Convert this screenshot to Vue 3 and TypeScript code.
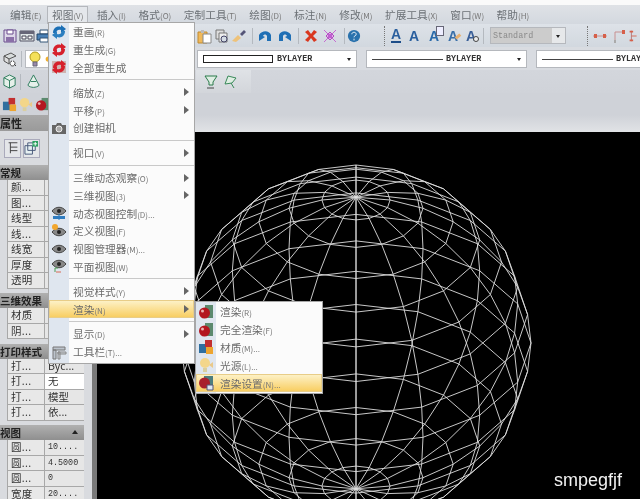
<script setup lang="ts">
type Part = [string, string, string?];
const regenTop = "M2 9C2 4 6 1.500 10 3V1l5 4-5 4V6C7.500 5 5 6.500 5 9z";
const regenBot = "M14 7C14 12 10 14.500 6 13v2l-5-4 5-4v3c2.500 1 4.500-.5 5-3z";
const icons: Record<string, Part[]> = {
  save: [["M2 2h12v12H2z", "#ddd8e8", "#6a4d8e"], ["M5 2h6v4H5z", "#fff", "#6a4d8e"], ["M4 9h8v5H4z", "#8a70a8"]],
  grid: [["M1 3h14v10H1z", "#dfe6e6", "#556"], ["M1 3h14v3H1z", "#667"], ["M3 8h4v3H3zM9 8h4v3H9z", "#fff", "#445"]],
  printer: [["M4 2h8v4H4z", "#fff", "#357"], ["M1 6h14v6H1z", "#4a80b5", "#246"], ["M4 10h8v4H4z", "#fff", "#357"]],
  blueS: [[regenTop, "#1b6fb5"], [regenBot, "#2c7fc0"]],
  redS: [[regenTop, "#d6202c"], [regenBot, "#d6202c"]],
  redS2: [["M1 2h14v12H1z", "#cdb4b1"], [regenTop, "#d6202c"], [regenBot, "#d6202c"]],
  camera: [["M1 5h4l1-2h4l1 2h4v9H1z", "#666"], ["M5 9a3 3 0 1 0 6 0a3 3 0 1 0-6 0", "#aaa", "#eee"]],
  eyeBlue: [["M1 6c4-5 10-5 14 0c-4 5-10 5-14 0z", "#888", "#444"], ["M6 6a2 2 0 1 0 4 0a2 2 0 1 0-4 0", "#222"], ["M2 11h12v3H2z", "#2f7cc0"], ["M8 9v6", "#c7d7e8", "#2f7cc0"]],
  eyeSun: [["M1 9c4-5 10-5 14 0c-4 5-10 5-14 0z", "#888", "#444"], ["M6 9a2 2 0 1 0 4 0a2 2 0 1 0-4 0", "#222"], ["M1 4a3 3 0 1 0 6 0a3 3 0 1 0-6 0", "#f2a72e"]],
  eye: [["M1 8c4-5 10-5 14 0c-4 5-10 5-14 0z", "#888", "#444"], ["M6 8a2 2 0 1 0 4 0a2 2 0 1 0-4 0", "#222"]],
  eyePlan: [["M1 6c4-5 10-5 14 0c-4 5-10 5-14 0z", "#888", "#444"], ["M6 6a2 2 0 1 0 4 0a2 2 0 1 0-4 0", "#222"], ["M4 14v-4h3", "none", "#4a9a55"], ["M5 14h5", "none", "#d86a55"]],
  toolbar: [["M2 3h12v3H2zM2 6h3v9H2z", "#bcc3cc", "#777"], ["M7 8h8v2H7zM7 8h2v7H7z", "#ccd2d8", "#888"]],
  paste: [["M1 4h9v11H1z", "#f0b95a", "#c08a30"], ["M6 6h8v9H6z", "#fff", "#888"], ["M4 2h3v3H4z", "#bbb"]],
  copy: [["M2 2h8v9H2z", "#ddd", "#777"], ["M5 5h8v9H5z", "#eee", "#777"], ["M7 11a3 3 0 1 0 6 0a3 3 0 1 0-6 0", "#d5dce4", "#446"]],
  brush: [["M1 13l6-6l3 3l-5 4z", "#eec27a"], ["M9 6l4-4l2 2l-4 4z", "#557"]],
  undo: [["M1 13V7c3-5 10-5 12 0v6h-4V8c-1-2-3-2-4 0l2 1l-6 4z", "#1f6fb5"]],
  redo: [["M15 13V7c-3-5-10-5-12 0v6h4V8c1-2 3-2 4 0l-2 1l6 4z", "#1f6fb5"]],
  cross: [["M2 4l3-2l3 4l3-4l3 2l-4 4l4 4l-3 2l-3-4l-3 4l-3-2l4-4z", "#d9371f"]],
  purple: [["M2 2l12 12M14 2L2 14", "none", "#c66ad0"], ["M4 8l4-4l4 4l-4 4z", "#e4b0ea", "#b04ec0"], ["M6 6h4v4H6z", "#c060d0"]],
  help: [["M1 8a7 7 0 1 0 14 0a7 7 0 1 0-14 0", "#2a72ad"], ["M5.500 6c0-3 5-3 5 0c0 2-2.500 1.500-2.500 3.500M8 11v2", "none", "#fff"]],
  dim1: [["M1 8h14", "none", "#c89090"], ["M2 6h3v4H2zM11 6h3v4h-3z", "#d6604a"]],
  dim2: [["M4 14V4h9", "none", "#c89090"], ["M11 2h3v4h-3z", "#d6604a"], ["M3 12h2v3H3z", "#aaa"]],
  dim3: [["M5 2v12", "none", "#b07070"], ["M3 2h4v2H3zM3 12h4v2H3z", "#d6604a"], ["M5 8h6", "none", "#d6604a"]],
  filter: [["M2 5l7-3l5 3l-7 3z", "#d8dcdc", "#555"], ["M2 5v5l5 3v-5z", "#ddd", "#555"], ["M10 10a2.500 2.500 0 1 0 1 0M12 13l2 2", "#fff", "#444"]],
  cube: [["M8 1l6 3v8l-6 3l-6-3V4z", "#e6f0ea", "#2a7a5a"], ["M2 4l6 3l6-3M8 7v8", "none", "#2a7a5a"]],
  cone: [["M8 1l6 11c-3 3-9 3-12 0z", "#e6f0ea", "#2a7a5a"], ["M5 8h6", "none", "#2a7a5a"]],
  material: [["M1 5h8v9H1z", "#2f6f9f"], ["M7 1h7v7H7z", "#c22f2f"], ["M8 8h7v7H8z", "#eda530"]],
  light: [["M2 6a5 5 0 1 0 10 0a5 5 0 1 0-10 0", "#f3d68a"], ["M5 11h4v4H5z", "#d9cfa0"], ["M11 8l4-3v6z", "#e9c98a"]],
  ball: [["M7 1h8v13H7z", "#5c8a6e"], ["M1 9a5.500 5.500 0 1 0 11 0a5.500 5.500 0 1 0-11 0", "#b3161f"], ["M3 7a1.500 1.500 0 1 0 3 0a1.500 1.500 0 1 0-3 0", "#e8b0b0"]],
  ballSet: [["M6 1h9v10H6z", "#4d7d7e"], ["M1 8a5.500 5.500 0 1 0 11 0a5.500 5.500 0 1 0-11 0", "#a8202c"], ["M9 10h6v5H9z", "#dfe9f2", "#557"]],
  wedge1: [["M2 2h12l-4 6v3l-4 0V8z", "#dfeee3", "#2a7a4a"], ["M4 14h7", "none", "#444"]],
  wedge2: [["M6 2l8 2l-4 5l-7 1z", "#dfeee3", "#3a8a5a"], ["M9 9l3 5", "none", "#3a8a5a"]],
  treeTool: [["M3 2h10M5 2v12M5 7h8M5 11h8", "none", "#333"]],
  addTool: [["M1 5h8v9H1zM4 2h8v8H4z", "#e6f0f2", "#457"], ["M9 0h6v6H9z", "#2aa060"], ["M12 1v4M10 3h4", "none", "#fff"]],
  bulb: [["M3 6a5 5 0 1 0 10 0a5 5 0 1 0-10 0", "#f4e05a", "#b09a20"], ["M6 11h4v4H6z", "#98a", "#667"]],
  sun: [["M3 8a3 3 0 1 0 6 0a3 3 0 1 0-6 0", "#f0b030"], ["M11 8h4", "none", "#e0a030"]],
};

interface Item { n?: string; w: number; a?: string; }
const row1: Item[] = [
  { w: 1 }, { n: "save", w: 17 }, { n: "grid", w: 17 }, { n: "printer", w: 17 }, { w: 144 },
  { n: "paste", w: 17 }, { n: "copy", w: 17 }, { n: "brush", w: 17 }, { n: "sep", w: 10 },
  { n: "undo", w: 17 }, { n: "redo", w: 20 }, { n: "sep", w: 8 }, { n: "cross", w: 17 },
  { n: "purple", w: 22 }, { n: "sep", w: 6 }, { n: "help", w: 14 }, { w: 20 }, { n: "dots", w: 6 },
  { a: "under", w: 18 }, { a: "plain", w: 18 }, { a: "doc", w: 22 }, { a: "pen", w: 16 }, { a: "zoom", w: 20 },
  { n: "sep", w: 5 }, { w: 4 },
];
const row1b: Item[] = [{ w: 18 }, { n: "dots", w: 6 }, { n: "dim1", w: 20 }, { n: "dim2", w: 17 }, { n: "dim3", w: 14 }];
const row3: Item[] = [{ w: 1 }, { n: "cube", w: 16 }, { n: "sep", w: 7 }, { n: "cone", w: 18 }];
const row3b: Item[] = [{ w: 5 }, { n: "wedge1", w: 20 }, { n: "wedge2", w: 18 }];
const row4: Item[] = [{ w: 1 }, { n: "material", w: 16 }, { n: "light", w: 17 }, { n: "ball", w: 17 }];

const menus = [
  ["编辑", "(E)"], ["视图", "(V)"], ["插入", "(I)"], ["格式", "(O)"],
  ["定制工具", "(T)"], ["绘图", "(D)"], ["标注", "(N)"], ["修改", "(M)"],
  ["扩展工具", "(X)"], ["窗口", "(W)"], ["帮助", "(H)"],
];

interface MenuRow { t?: string; k?: string; i?: string; arrow?: boolean; on?: boolean; sep?: boolean; }
const viewMenu: MenuRow[] = [
  { t: "重画", k: "(R)", i: "blueS" }, { t: "重生成", k: "(G)", i: "redS" }, { t: "全部重生成", i: "redS2" },
  { sep: true },
  { t: "缩放", k: "(Z)", arrow: true }, { t: "平移", k: "(P)", arrow: true }, { t: "创建相机", i: "camera" },
  { sep: true },
  { t: "视口", k: "(V)", arrow: true },
  { sep: true },
  { t: "三维动态观察", k: "(O)", arrow: true }, { t: "三维视图", k: "(3)", arrow: true },
  { t: "动态视图控制", k: "(D)...", i: "eyeBlue" }, { t: "定义视图", k: "(F)", i: "eyeSun" },
  { t: "视图管理器", k: "(M)...", i: "eye" }, { t: "平面视图", k: "(W)", i: "eyePlan" },
  { sep: true },
  { t: "视觉样式", k: "(Y)", arrow: true }, { t: "渲染", k: "(N)", arrow: true, on: true },
  { sep: true },
  { t: "显示", k: "(D)", arrow: true }, { t: "工具栏", k: "(T)...", i: "toolbar" },
];
const renderMenu: MenuRow[] = [
  { t: "渲染", k: "(R)", i: "ball" }, { t: "完全渲染", k: "(F)", i: "ball" },
  { t: "材质", k: "(M)...", i: "material" }, { t: "光源", k: "(L)...", i: "light" },
  { t: "渲染设置", k: "(N)...", i: "ballSet", on: true },
];

const groups: { h: string; rows: [string, string, boolean?][]; caret?: boolean }[] = [
  { h: "常规", rows: [["颜...", ""], ["图...", ""], ["线型", ""], ["线...", ""], ["线宽", ""], ["厚度", ""], ["透明", ""]] },
  { h: "三维效果", rows: [["材质", ""], ["阴...", ""]] },
  { h: "打印样式", rows: [["打...", "Byc..."], ["打...", "无", true], ["打...", "模型"], ["打...", "依..."]] },
  { h: "视图", caret: true, rows: [["圆...", "10...."], ["圆...", "4.5000"], ["圆...", "0"], ["宽度", "20...."]] },
];
const isNum = (s: string) => /^[0-9]/.test(s);

// Wireframe sphere: orthographic projection, north pole tipped 35 degrees toward the viewer.
const Ry = 178, Rx = 175, cx = 259, cy = 211;
const rad = Math.PI / 180;
const sinT = Math.sin(35 * rad), cosT = Math.cos(35 * rad);
const latList = Array.from({ length: 17 }, (_, i) => 90 - i * 11.25);
function project(lat: number, lon: number): string {
  const x = Math.cos(lat * rad) * Math.sin(lon * rad);
  const z = Math.cos(lat * rad) * Math.cos(lon * rad);
  const y = Math.sin(lat * rad);
  return `${(cx + Rx * x).toFixed(1)},${(cy - Ry * (y * cosT - z * sinT)).toFixed(1)}`;
}
const lons = Array.from({ length: 16 }, (_, i) => i * 22.5);
const wire: string[] = [];
for (const lat of latList.slice(1, -1)) {
  wire.push([...lons, 360].map((l) => project(lat, l)).join(" "));
}
for (const lon of lons) {
  wire.push(latList.map((l) => project(l, lon)).join(" "));
}
</script>

<template>
  <div class="app">
    <div class="titlestrip"></div>
    <div class="menubar">
      <span v-for="m in menus" :key="m[0]" class="mb" :class="{ active: m[0] === '视图' }">{{ m[0] }}<small>{{ m[1] }}</small></span>
    </div>

    <div class="tb r1">
      <template v-for="(it, i) in row1" :key="i">
        <div class="cell" :style="{ width: it.w + 'px' }">
          <i v-if="it.n === 'sep'" class="sep"></i>
          <i v-else-if="it.n === 'dots'" class="dots"></i>
          <svg v-else-if="it.n" width="16" height="16" viewBox="0 0 16 16"><path v-for="(p, j) in icons[it.n]" :key="j" :d="p[0]" :fill="p[1]" :stroke="p[2] || 'none'" /></svg>
          <span v-else-if="it.a" class="aa" :class="it.a">A</span>
        </div>
      </template>
      <div class="combo std"><span>Standard</span><b class="drop"></b></div>
      <template v-for="(it, i) in row1b" :key="'b' + i">
        <div class="cell" :style="{ width: it.w + 'px' }">
          <i v-if="it.n === 'dots'" class="dots"></i>
          <svg v-else-if="it.n" width="16" height="16" viewBox="0 0 16 16"><path v-for="(p, j) in icons[it.n]" :key="j" :d="p[0]" :fill="p[1]" :stroke="p[2] || 'none'" /></svg>
        </div>
      </template>
    </div>

    <div class="tb r2">
      <div class="cell first"><svg width="16" height="16" viewBox="0 0 16 16"><path v-for="(p, j) in icons.filter" :key="j" :d="p[0]" :fill="p[1]" :stroke="p[2] || 'none'" /></svg></div>
      <div class="cell gapcell"><i class="sep"></i></div>
      <div class="layerbox">
        <svg width="16" height="16" viewBox="0 0 16 16"><path v-for="(p, j) in icons.bulb" :key="j" :d="p[0]" :fill="p[1]" :stroke="p[2] || 'none'" /></svg>
        <svg width="14" height="16" viewBox="0 0 16 16"><path v-for="(p, j) in icons.sun" :key="j" :d="p[0]" :fill="p[1]" :stroke="p[2] || 'none'" /></svg>
      </div>
      <div class="combo wide color"><i class="swatch"></i><span>BYLAYER</span><b class="drop"></b></div>
      <div class="combo wide line"><i class="ln"></i><span>BYLAYER</span><b class="drop"></b></div>
      <div class="combo wide line last"><i class="ln"></i><span>BYLAYER</span></div>
    </div>

    <div class="tb r3">
      <div class="cell" v-for="(it, i) in row3" :key="i" :style="{ width: it.w + 'px' }">
        <i v-if="it.n === 'sep'" class="sep"></i>
        <svg v-else-if="it.n" width="15" height="15" viewBox="0 0 16 16"><path v-for="(p, j) in icons[it.n]" :key="j" :d="p[0]" :fill="p[1]" :stroke="p[2] || 'none'" /></svg>
      </div>
      <div class="band">
        <div class="cell" v-for="(it, i) in row3b" :key="i" :style="{ width: it.w + 'px' }">
          <svg v-if="it.n" width="16" height="16" viewBox="0 0 16 16"><path v-for="(p, j) in icons[it.n]" :key="j" :d="p[0]" :fill="p[1]" :stroke="p[2] || 'none'" /></svg>
        </div>
      </div>
    </div>

    <div class="tb r4">
      <div class="cell" v-for="(it, i) in row4" :key="i" :style="{ width: it.w + 'px' }">
        <svg v-if="it.n" width="15" height="15" viewBox="0 0 16 16"><path v-for="(p, j) in icons[it.n]" :key="j" :d="p[0]" :fill="p[1]" :stroke="p[2] || 'none'" /></svg>
      </div>
    </div>

    <div class="main">
      <aside class="panel">
        <div class="paneltitle">属性</div>
        <div class="paneltools">
          <span class="ptool"><svg width="14" height="14" viewBox="0 0 16 16"><path v-for="(p, j) in icons.treeTool" :key="j" :d="p[0]" :fill="p[1]" :stroke="p[2] || 'none'" /></svg></span>
          <span class="ptool"><svg width="15" height="15" viewBox="0 0 16 16"><path v-for="(p, j) in icons.addTool" :key="j" :d="p[0]" :fill="p[1]" :stroke="p[2] || 'none'" /></svg></span>
        </div>
        <div class="props">
          <section v-for="g in groups" :key="g.h" class="grp">
            <div class="ghead"><span>{{ g.h }}</span><b v-if="g.caret" class="caret"></b></div>
            <div v-for="(r, i) in g.rows" :key="i" class="prow">
              <span class="lab">{{ r[0] }}</span>
              <span class="val" :class="{ white: r[2], num: isNum(r[1]) }">{{ r[1] }}</span>
            </div>
          </section>
        </div>
      </aside>
      <div class="splitter"></div>
      <div class="work">
        <div class="workstrip"></div>
        <div class="canvas">
          <svg class="sphere" width="543" height="367" viewBox="0 0 543 367">
            <polyline v-for="(p, i) in wire" :key="i" :points="p" fill="none" stroke="#dedede" stroke-width="0.9" />
          </svg>
          <span class="mark">smpegfjf</span>
        </div>
      </div>
    </div>

    <div class="menu view">
      <template v-for="(r, i) in viewMenu" :key="i">
        <div v-if="r.sep" class="msep"></div>
        <div v-else class="mrow" :class="{ on: r.on }">
          <span class="mic"><svg v-if="r.i" width="16" height="16" viewBox="0 0 16 16"><path v-for="(p, j) in icons[r.i]" :key="j" :d="p[0]" :fill="p[1]" :stroke="p[2] || 'none'" /></svg></span>
          <span class="mtxt">{{ r.t }}<small>{{ r.k }}</small></span>
          <b v-if="r.arrow" class="arrow"></b>
        </div>
      </template>
    </div>

    <div class="menu render">
      <div v-for="(r, i) in renderMenu" :key="i" class="mrow" :class="{ on: r.on }">
        <span class="mic"><svg v-if="r.i" width="16" height="16" viewBox="0 0 16 16"><path v-for="(p, j) in icons[r.i]" :key="j" :d="p[0]" :fill="p[1]" :stroke="p[2] || 'none'" /></svg></span>
        <span class="mtxt">{{ r.t }}<small>{{ r.k }}</small></span>
      </div>
    </div>
  </div>
</template>

<style scoped>
.app {
  position: relative;
  width: 640px;
  height: 499px;
  overflow: hidden;
  display: flex;
  flex-direction: column;
  background: #d5d8dd;
  font-family: "Noto Sans CJK SC", "Liberation Sans", sans-serif;
  font-size: 10.7px;
  color: #666;
  filter: blur(0.35px);
}
small { font-size: 8px; color: #777; }
.titlestrip { height: 5px; background: #fafafa; flex: none; }
.menubar {
  height: 19px;
  flex: none;
  display: flex;
  align-items: center;
  padding-left: 10px;
  gap: 12.5px;
  background: linear-gradient(#dfe2e6, #d3d8df);
  color: #6b7075;
  white-space: nowrap;
}
.mb { line-height: 17px; }
.mb.active {
  margin: 0 -4px 0 -7px;
  padding: 0 5px;
  background: #e4e7eb;
  box-shadow: inset 0 0 0 1px #b4b7bc;
}
.tb { display: flex; align-items: center; flex: none; }
.r1 { height: 23px; background: linear-gradient(#dde2e8, #d2d8df); }
.r2 { height: 23px; background: #d9dce1; padding-top: 1px; box-sizing: border-box; }
.r3 { height: 23px; background: linear-gradient(#d3d6dc, #d0d3d9); }
.r4 { height: 22px; background: #cfd2d8; }
.cell { flex: none; display: flex; align-items: center; justify-content: center; height: 100%; }
.cell svg { display: block; }
.sep { width: 1px; height: 16px; background: #b4b9bf; display: block; }
.dots { width: 0; height: 20px; border-left: 1px dotted #777; display: block; }
.aa { font: bold 14px "Liberation Sans", sans-serif; color: #2a5f9e; position: relative; line-height: 16px; }
.aa.under { border-bottom: 2px solid #1d4d88; line-height: 13px; }
.aa.doc { color: #2a6aaa; }
.aa.doc::after { content: ""; position: absolute; left: 7px; top: -2px; width: 6px; height: 8px; background: #eef; border: 1px solid #667; }
.aa.pen { color: #3a6fa8; }
.aa.pen::after { content: ""; position: absolute; left: 7px; top: 7px; width: 6px; height: 3px; background: #e8b070; transform: rotate(-40deg); }
.aa.zoom { color: #3a5f98; }
.aa.zoom::after { content: ""; position: absolute; left: 7px; top: 8px; width: 4px; height: 4px; border: 1px solid #444; border-radius: 50%; background: #eee; }
.combo {
  flex: none;
  display: flex;
  align-items: center;
  box-sizing: border-box;
  background: #fff;
  border: 1px solid #b5b8bd;
  font: 8.4px "Liberation Mono", monospace;
  font-weight: 700;
  color: #333;
  position: relative;
}
.std { width: 76px; height: 17px; padding-left: 2px; background: linear-gradient(90deg, #ccc 0 83%, #e6e8ea 83%); color: #8a8a8a; font-weight: 400; }
.drop { position: absolute; right: 5px; top: 50%; margin-top: -1px; width: 0; height: 0; border: 2.5px solid transparent; border-top: 3px solid #222; border-bottom: 0; }
.first { width: 19px; }
.gapcell { width: 4px; }
.layerbox { flex: none; width: 170px; height: 18px; margin-left: 2px; background: #fff; border: 1px solid #b8bbc0; box-sizing: border-box; display: flex; align-items: center; padding-left: 1px; }
.wide { height: 18px; }
.color { width: 160px; padding-left: 5px; margin-left: 2px; }
.swatch { width: 70px; height: 8px; box-sizing: border-box; border: 1px solid #222; background: #fff; margin-right: 4px; flex: none; }
.line { width: 161px; margin-left: 9px; padding-left: 5px; }
.last { width: 110px; }
.ln { width: 71px; height: 1px; background: #444; margin-right: 3px; flex: none; }
.band { margin-left: 154px; height: 100%; width: 55px; display: flex; background: linear-gradient(#dfe2e6, #d3d6db); }

.main { flex: 1; display: flex; min-height: 0; }
.panel { width: 92px; flex: none; background: #d9dbdf; display: flex; flex-direction: column; }
.splitter { width: 5px; flex: none; background: #7a7a7a; }
.paneltitle { height: 16px; flex: none; background: linear-gradient(#a9a9a9, #9a9a9a); font-weight: 700; color: #222; font-size: 11px; line-height: 16px; }
.paneltools { height: 34px; flex: none; display: flex; align-items: center; gap: 2px; padding-left: 4px; box-sizing: border-box; }
.ptool { width: 17px; height: 19px; display: flex; align-items: center; justify-content: center; border: 1px solid #aab; box-sizing: border-box; background: #e4e6e9; }
.props { display: flex; flex-direction: column; gap: 4.5px; width: 84px; }
.ghead { height: 15px; background: linear-gradient(#b0b0b0, #8f8f8f); font-weight: 700; color: #222; line-height: 15px; font-size: 10.5px; display: flex; justify-content: space-between; padding-right: 6px; }
.caret { width: 0; height: 0; margin-top: 5px; border: 3px solid transparent; border-bottom: 4px solid #222; border-top: 0; }
.prow { height: 15.5px; display: flex; margin-left: 7px; box-sizing: border-box; border-bottom: 1px solid #a8a8a8; line-height: 14px; color: #333; font-size: 10.5px; }
.lab { width: 38px; flex: none; background: #e8e8e8; border-left: 1px solid #a8a8a8; border-right: 1px solid #a8a8a8; box-sizing: border-box; padding-left: 3px; letter-spacing: 0.3px; }
.val { flex: 1; background: #e6e6e6; padding-left: 3px; white-space: nowrap; overflow: hidden; }
.val.white { background: #fff; }
.val.num { font: 8.4px/14px "Liberation Mono", monospace; }

.work { flex: 1; display: flex; flex-direction: column; min-width: 0; }
.workstrip { height: 17px; flex: none; background: linear-gradient(#cfd2d8, #e1e3e6); }
.canvas { flex: 1; background: #000; position: relative; overflow: hidden; }
.sphere { display: block; }
.mark { position: absolute; left: 457px; top: 338px; color: #f2f2f2; font: 18px "Liberation Sans", sans-serif; }

.menu {
  position: absolute;
  box-sizing: border-box;
  background: linear-gradient(90deg, #dfe6ef 0 20px, #fbfbfb 20px);
  border: 1px solid #a7a7a7;
  color: #6b6b6b;
  white-space: nowrap;
}
.view { left: 48px; top: 22px; width: 147px; height: 342px; }
.render { left: 195px; top: 301px; width: 128px; height: 93px; padding-top: 1px; }
.mrow { height: 17.8px; display: flex; align-items: center; position: relative; box-sizing: border-box; }
.mrow.on { background: linear-gradient(#fdf3cc, #f8cc5c); box-shadow: inset 0 0 0 1px #e8cd88; }
.mic { width: 20px; height: 100%; flex: none; display: flex; align-items: center; justify-content: center; margin-right: 4px; }
.msep { height: 7px; display: flex; align-items: center; margin-left: 20px; }
.msep::after { content: ""; display: block; flex: 1; height: 1px; background: #c9c9c9; }
.arrow { position: absolute; right: 5px; top: 5px; width: 0; height: 0; border: 4px solid transparent; border-left: 5px solid #666; border-right: 0; }
</style>

<style>
html, body { margin: 0; padding: 0; background: #000; overflow: hidden; }
</style>
